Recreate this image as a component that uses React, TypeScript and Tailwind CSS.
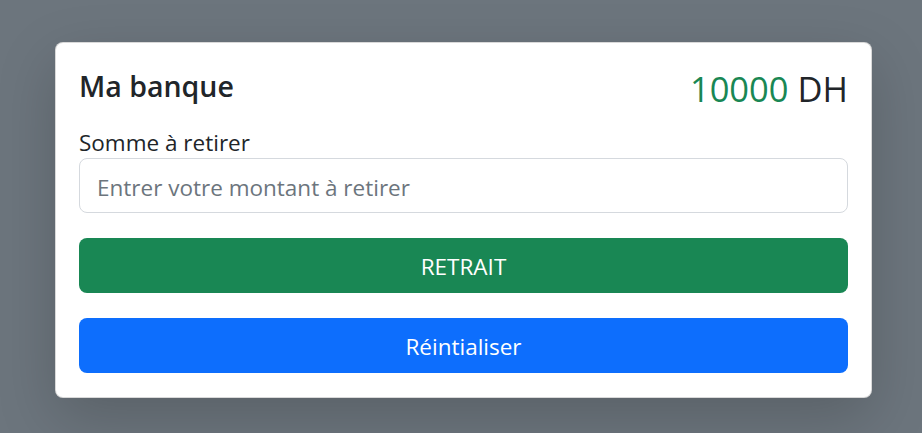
import { useState } from "react";

export default function App() {
  const [solde, setSolde] = useState(10000);
  const [montant, setMontant] = useState("");

  const retirer = () => {
    const m = Number(montant);
    if (m > 0 && m <= solde) setSolde(solde - m);
    setMontant("");
  };

  return (
    <div
      className="min-h-screen bg-[#6c757d] pl-[55px] pt-[42px]"
      style={{ fontFamily: '"Open Sans", "Noto Sans", sans-serif' }}
    >
      <div className="w-[817px] rounded-lg border border-black/15 bg-white px-[23px] pb-[24px] pt-[25px] shadow-[0_20px_60px_rgba(0,0,0,0.175)]">
        {/* header */}
        <div className="mb-[19px] flex items-start justify-between text-[#212529]">
          <h4 className="pt-px text-[28.5px] font-semibold leading-[34px]">Ma banque</h4>
          <h2 className="text-[34.5px] font-medium leading-[41px]">
            <span className="text-[#198754]">{solde}</span> DH
          </h2>
        </div>

        <label className="block text-[22.5px] leading-[30px] text-[#212529]">
          Somme à retirer
        </label>
        <input
          type="number"
          value={montant}
          onChange={(e) => setMontant(e.target.value)}
          placeholder="Entrer votre montant à retirer"
          className="block h-[55px] w-full rounded-lg border border-[#d5d9de] px-[17px] pt-[3px] text-[22.5px] text-[#212529] outline-none placeholder:text-[#6c757d]"
        />

        <button
          onClick={retirer}
          className="mt-[25px] block h-[55px] w-full rounded-lg bg-[#198754] pt-[3px] text-[22.5px] text-white"
        >
          RETRAIT
        </button>
        <button
          onClick={() => {
            setSolde(10000);
            setMontant("");
          }}
          className="mt-[25px] block h-[55px] w-full rounded-lg bg-[#0d6efd] pt-[3px] text-[22.5px] text-white"
        >
          Réintialiser
        </button>
      </div>
    </div>
  );
}
